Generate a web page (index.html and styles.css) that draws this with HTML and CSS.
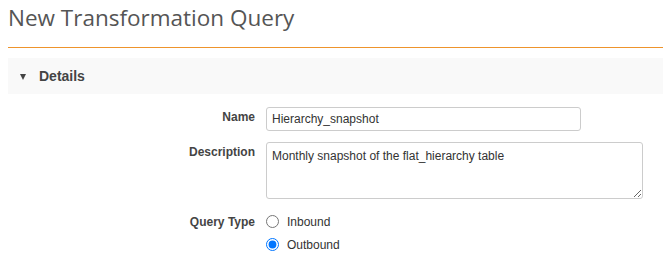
FILE: index.html
```html
<!DOCTYPE html>
<html lang="en">
<head>
  <meta charset="UTF-8">
  <meta name="viewport" content="width=device-width, initial-scale=1.0">
  <title>New Transformation Query</title>
  <link rel="stylesheet" href="styles.css">
</head>
<body>
  <div class="page">
    <header class="page-header">
      <h1>New Transformation Query</h1>
    </header>

    <section class="panel">
      <div class="panel-heading">
        <span class="caret"></span>
        <span class="panel-title">Details</span>
      </div>

      <form class="form-grid" id="query-form">
        <label class="field-label" for="name">Name</label>
        <div class="field">
          <input type="text" id="name" class="text-input" value="Hierarchy_snapshot">
        </div>

        <label class="field-label" for="description">Description</label>
        <div class="field">
          <textarea id="description" class="text-area" rows="3">Monthly snapshot of the flat_hierarchy table</textarea>
        </div>

        <span class="field-label label-radio">Query Type</span>
        <div class="field radio-list">
          <label class="radio-option">
            <input type="radio" name="query-type" value="inbound">
            <span>Inbound</span>
          </label>
          <label class="radio-option">
            <input type="radio" name="query-type" value="outbound" checked>
            <span>Outbound</span>
          </label>
        </div>
      </form>
    </section>
  </div>
</body>
</html>
```

FILE: styles.css
```css
body {
  margin: 0;
  font-family: "Liberation Sans", Arial, sans-serif;
  font-size: 13px;
  color: #333;
  background-color: #fff;
}
.page {
  padding-left: 8px;
}
.page-header {
  border-bottom: 1px solid #ee942c;
  padding-top: 3px;
  height: 48px;
  box-sizing: border-box;
}
.page-header h1 {
  margin: 0;
  font-family: "Open Sans", sans-serif;
  font-weight: 400;
  font-size: 22.5px;
  line-height: 30px;
  color: #555;
}
.panel {
  margin-top: 10px;
}
.panel-heading {
  display: flex;
  align-items: center;
  height: 36px;
  padding-left: 12px;
  background-color: #f9f9f9;
}
.caret {
  width: 0;
  height: 0;
  border-left: 3.5px solid transparent;
  border-right: 3.5px solid transparent;
  border-top: 6px solid #444;
  margin-right: 13px;
  margin-top: 2px;
}
.panel-title {
  font-weight: bold;
  font-size: 14px;
  color: #444;
}
.form-grid {
  display: grid;
  grid-template-columns: 247px 1fr;
  column-gap: 11px;
  row-gap: 11px;
  padding-top: 13px;
}
.field-label {
  text-align: right;
  font-weight: bold;
  font-size: 12px;
  color: #444;
  padding-top: 3px;
}
.label-radio {
  padding-top: 5px;
}
.text-input,
.text-area {
  box-sizing: border-box;
  font-family: "Liberation Sans", Arial, sans-serif;
  font-size: 12px;
  color: #333;
  border: 1px solid #ccc;
  border-radius: 3px;
  padding: 3px 5px;
  margin: 0;
}
.text-input {
  width: 315px;
  height: 24px;
}
.text-area {
  display: block;
  width: 377px;
  height: 57px;
  padding-top: 6px;
}
.radio-list {
  display: flex;
  flex-direction: column;
  gap: 7px;
  padding-top: 3px;
}
.radio-option {
  display: flex;
  align-items: center;
  gap: 8px;
  font-size: 12px;
  color: #333;
}
.radio-option input {
  margin: 0;
  width: 13px;
  height: 13px;
}
.radio-option span {
  padding-top: 2px;
}
```
